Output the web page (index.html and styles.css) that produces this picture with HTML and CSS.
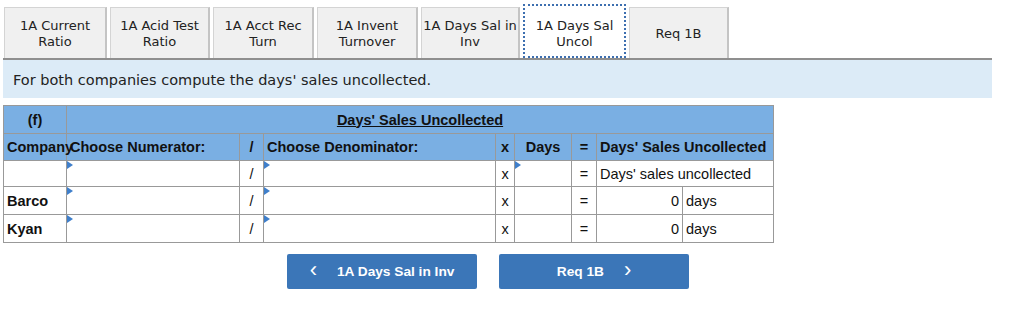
FILE: index.html
```html
<!DOCTYPE html>
<html>
<head>
<meta charset="utf-8">
<link rel="stylesheet" href="styles.css">
</head>
<body>
<div class="page">
  <div class="tabs">
    <div class="tab t1">1A Current<br>Ratio</div>
    <div class="tab">1A Acid Test<br>Ratio</div>
    <div class="tab w101">1A Acct Rec<br>Turn</div>
    <div class="tab w101">1A Invent<br>Turnover</div>
    <div class="tab w99">1A Days Sal in<br>Inv</div>
    <div class="tab active">1A Days Sal<br>Uncol</div>
    <div class="tab">Req 1B</div>
  </div>
  <div class="banner">For both companies compute the days' sales uncollected.</div>
  <table class="grid">
    <colgroup>
      <col class="c-co"><col class="c-num"><col class="c-sl"><col class="c-den"><col class="c-x"><col class="c-days"><col class="c-eq"><col class="c-res"><col class="c-unit">
    </colgroup>
    <tr class="hd r1">
      <th class="center">(f)</th>
      <th colspan="8" class="center"><u>Days' Sales Uncollected</u></th>
    </tr>
    <tr class="hd r2">
      <th class="left nowrap">Company</th>
      <th class="left">Choose Numerator:</th>
      <th class="center">/</th>
      <th class="left">Choose Denominator:</th>
      <th class="center">x</th>
      <th class="center">Days</th>
      <th class="center">=</th>
      <th colspan="2" class="left">Days' Sales Uncollected</th>
    </tr>
    <tr class="r3">
      <td></td>
      <td class="inp"><span class="tri"></span></td>
      <td class="center">/</td>
      <td class="inp"><span class="tri"></span></td>
      <td class="center">x</td>
      <td class="inp"><span class="tri"></span></td>
      <td class="center">=</td>
      <td colspan="2" class="left">Days' sales uncollected</td>
    </tr>
    <tr class="r4">
      <td class="bold">Barco</td>
      <td class="inp"><span class="tri"></span></td>
      <td class="center">/</td>
      <td class="inp"><span class="tri"></span></td>
      <td class="center">x</td>
      <td></td>
      <td class="center">=</td>
      <td class="right">0</td>
      <td class="left">days</td>
    </tr>
    <tr class="r4">
      <td class="bold">Kyan</td>
      <td class="inp"><span class="tri"></span></td>
      <td class="center">/</td>
      <td class="inp"><span class="tri"></span></td>
      <td class="center">x</td>
      <td></td>
      <td class="center">=</td>
      <td class="right">0</td>
      <td class="left">days</td>
    </tr>
  </table>
  <div class="nav">
    <div class="btn"><span class="chev">&lsaquo;</span><span>1A Days Sal in Inv</span></div>
    <div class="btn"><span>Req 1B</span><span class="chev">&rsaquo;</span></div>
  </div>
</div>
</body>
</html>
```

FILE: styles.css
```css
html, body {
  margin: 0;
  padding: 0;
  background: #fff;
}
.page {
  padding: 4px 0 0 3px;
  width: 990px;
}
.tabs {
  display: flex;
  align-items: flex-end;
  height: 54px;
  padding-left: 1px;
  gap: 3px;
}
.tab {
  box-sizing: border-box;
  width: 100px;
  height: 51px;
  background: #f0f0f0;
  border: 1px solid #d4d4d4;
  border-right: 2px solid #c4c4c4;
  border-bottom: none;
  font-family: "DejaVu Sans", Verdana, sans-serif;
  font-size: 13px;
  line-height: 16px;
  color: #222;
  text-align: center;
  display: flex;
  align-items: center;
  justify-content: center;
  padding-top: 2px;
}
.tab.t1 { width: 103px; }
.tab.w101 { width: 101px; }
.tab.w99 { width: 99px; }
.tab.active {
  background: #fff;
  height: 54px;
  width: 103px;
  border: 2px dotted #3d6fb0;
  padding-top: 6px;
}
.banner {
  box-sizing: border-box;
  width: 989px;
  height: 40px;
  background: #dcebf7;
  border-top: 2px solid #8f8f8f;
  font-family: "DejaVu Sans", Verdana, sans-serif;
  font-size: 14.5px;
  color: #222;
  padding: 12px 0 0 10px;
}
.grid {
  margin-top: 7px;
  border-collapse: collapse;
  table-layout: fixed;
  width: 770px;
  font-family: "Liberation Sans", Arial, sans-serif;
  font-size: 14.5px;
  color: #111;
}
.c-co { width: 63px; }
.c-num { width: 173px; }
.c-sl { width: 24px; }
.c-den { width: 232px; }
.c-x { width: 19px; }
.c-days { width: 57px; }
.c-eq { width: 25px; }
.c-res { width: 86px; }
.c-unit { width: 91px; }
.grid th, .grid td {
  border: 1px solid #999;
  padding: 0 3px;
  overflow: visible;
  white-space: nowrap;
}
.grid th {
  background: #7aafe3;
  font-weight: bold;
}
.r1 { height: 28px; }
.r2 { height: 27px; }
.r3 { height: 26px; }
.r4 { height: 28px; }
.center { text-align: center; }
.left { text-align: left; }
.right { text-align: right; }
.bold { font-weight: bold; }
.grid td.inp {
  position: relative;
  padding: 0;
}
.tri {
  position: absolute;
  left: 0;
  top: 0;
  width: 0;
  height: 0;
  border-top: 4px solid transparent;
  border-bottom: 4px solid transparent;
  border-left: 6px solid #3f7fcb;
}
.nav {
  display: flex;
  justify-content: center;
  gap: 22px;
  width: 970px;
  margin-top: 11px;
}
.btn {
  box-sizing: border-box;
  width: 190px;
  height: 35px;
  background: #3b76b8;
  border-radius: 2px;
  color: #fff;
  font-family: "Liberation Sans", Arial, sans-serif;
  font-weight: bold;
  font-size: 13.7px;
  display: flex;
  align-items: center;
  justify-content: center;
  gap: 20px;
}
.chev {
  font-size: 22px;
  font-weight: normal;
  line-height: 1;
  margin-top: -3px;
}
```
